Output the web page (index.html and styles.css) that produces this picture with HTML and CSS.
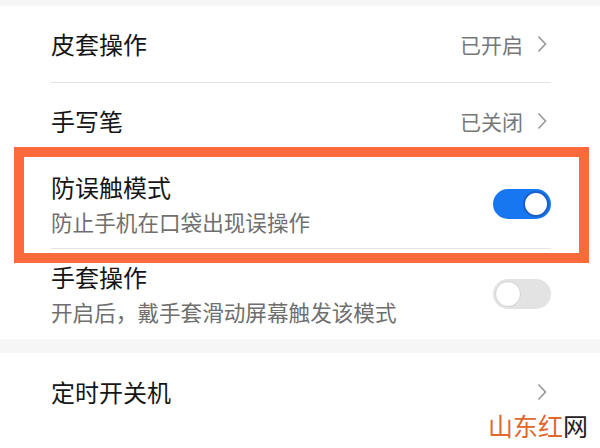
FILE: index.html
```html
<!DOCTYPE html>
<html lang="zh-CN">
<head>
<meta charset="utf-8">
<link rel="stylesheet" href="styles.css">
</head>
<body>
<div class="page">
  <div class="band band-top"></div>
  <div class="group">
    <div class="row nav">
      <span class="title">皮套操作</span>
      <span class="value">已开启<svg class="chev" viewBox="0 0 10 18"><path d="M1.5 1.5 L8.5 9 L1.5 16.5" /></svg></span>
    </div>
    <div class="divider"></div>
    <div class="row nav">
      <span class="title">手写笔</span>
      <span class="value">已关闭<svg class="chev" viewBox="0 0 10 18"><path d="M1.5 1.5 L8.5 9 L1.5 16.5" /></svg></span>
    </div>
    <div class="row sw first">
      <div class="texts">
        <div class="title">防误触模式</div>
        <div class="sub">防止手机在口袋出现误操作</div>
      </div>
      <div class="switch on"><span class="knob"></span></div>
    </div>
    <div class="divider"></div>
    <div class="row sw second">
      <div class="texts">
        <div class="title">手套操作</div>
        <div class="sub">开启后，戴手套滑动屏幕触发该模式</div>
      </div>
      <div class="switch off"><span class="knob"></span></div>
    </div>
  </div>
  <div class="band band-mid"></div>
  <div class="group">
    <div class="row nav last">
      <span class="title">定时开关机</span>
      <span class="value"><svg class="chev" viewBox="0 0 10 18"><path d="M1.5 1.5 L8.5 9 L1.5 16.5" /></svg></span>
    </div>
  </div>
</div>
<div class="highlight"></div>
<div class="watermark"><span class="wm-red">山东红</span><span class="wm-dark">网</span></div>
</body>
</html>
```
FILE: styles.css
```css
html, body {
  margin: 0;
  padding: 0;
  background: #ffffff;
}
body {
  width: 600px;
  height: 448px;
  overflow: hidden;
  position: relative;
  font-family: "Noto Sans CJK SC", "Noto Sans", sans-serif;
  color: #1a1a1a;
}
.band {
  background: #f6f6f6;
}
.band-top {
  height: 6px;
}
.band-mid {
  height: 14px;
}
.group {
  padding: 0 49px 0 51px;
  background: #fff;
}
.row {
  display: flex;
  align-items: center;
  justify-content: space-between;
}
.row.nav {
  height: 76px;
}
.row.nav.last {
  height: 78px;
}
.title {
  font-size: 24px;
  line-height: 30px;
  color: #151515;
}
.value {
  display: flex;
  align-items: center;
  font-size: 21px;
  color: #777777;
  gap: 14px;
  margin-right: 4px;
}
.chev {
  width: 10px;
  height: 18px;
  fill: none;
  stroke: #9a9a9a;
  stroke-width: 1.7;
}
.divider {
  height: 1px;
  background: #e4e4e4;
}
.row.sw {
  height: 89px;
}
.row.sw.second {
  height: 90px;
}
.texts {
  display: flex;
  flex-direction: column;
  gap: 6px;
}
.sub {
  font-size: 21.6px;
  line-height: 28px;
  color: #6f6f6f;
}
.switch {
  width: 58px;
  height: 30px;
  border-radius: 15px;
  box-sizing: border-box;
  display: flex;
  align-items: center;
  padding: 2px;
}
.switch.on {
  background: #1677f0;
  justify-content: flex-end;
}
.switch.off {
  background: #e3e3e3;
  justify-content: flex-start;
}
.knob {
  width: 26px;
  height: 26px;
  border-radius: 50%;
  background: #fff;
  box-sizing: border-box;
}
.switch.on .knob {
  border: 2px solid #1a5fc4;
}
.switch.off .knob {
  border: 1.5px solid #d2d2d2;
}
.highlight {
  position: absolute;
  left: 14px;
  top: 147px;
  width: 575px;
  height: 116px;
  box-sizing: border-box;
  border: 10px solid #fa6a3c;
}
.watermark {
  position: absolute;
  right: 12px;
  bottom: 9px;
  font-size: 25px;
  line-height: 28px;
  font-family: "Noto Sans CJK SC", sans-serif;
}
.wm-red {
  color: #e0672e;
}
.wm-dark {
  color: #222;
}
```
